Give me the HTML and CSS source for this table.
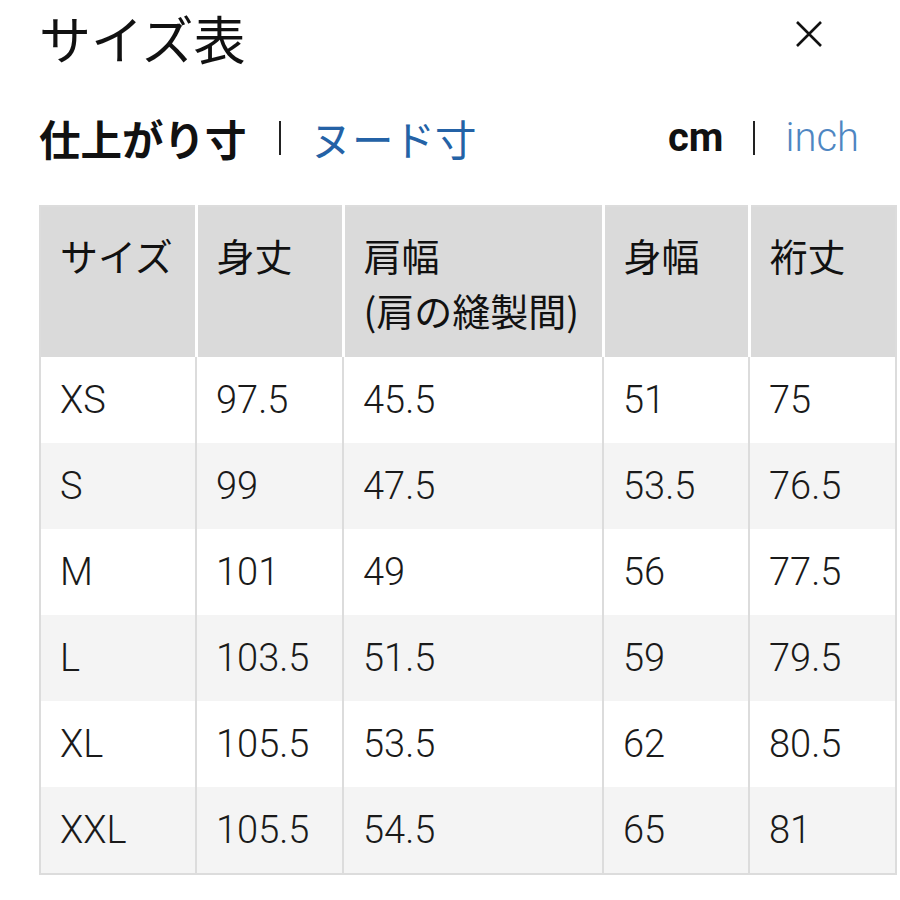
FILE: index.html
```html
<!DOCTYPE html>
<html lang="ja">
<head>
<meta charset="utf-8">
<link rel="stylesheet" href="styles.css">
</head>
<body>
<div class="page">
  <header class="title-row">
    <h1 class="title">サイズ表</h1>
    <button class="close" aria-label="閉じる">
      <svg width="28" height="28" viewBox="0 0 28 28"><path d="M2 2 L26 26 M26 2 L2 26" stroke="#111" stroke-width="2.6" fill="none"/></svg>
    </button>
  </header>
  <div class="tabs-row">
    <div class="tabs">
      <span class="tab active">仕上がり寸</span>
      <span class="sep"></span>
      <span class="tab link">ヌード寸</span>
    </div>
    <div class="units">
      <span class="unit active">cm</span>
      <span class="sep"></span>
      <span class="unit link">inch</span>
    </div>
  </div>
  <table class="size-table">
    <colgroup>
      <col class="c1"><col class="c2"><col class="c3"><col class="c4"><col class="c5">
    </colgroup>
    <thead>
      <tr><th>サイズ</th><th>身丈</th><th>肩幅<br>(肩の縫製間)</th><th>身幅</th><th>裄丈</th></tr>
    </thead>
    <tbody>
      <tr><td>XS</td><td>97.5</td><td>45.5</td><td>51</td><td>75</td></tr>
      <tr><td>S</td><td>99</td><td>47.5</td><td>53.5</td><td>76.5</td></tr>
      <tr><td>M</td><td>101</td><td>49</td><td>56</td><td>77.5</td></tr>
      <tr><td>L</td><td>103.5</td><td>51.5</td><td>59</td><td>79.5</td></tr>
      <tr><td>XL</td><td>105.5</td><td>53.5</td><td>62</td><td>80.5</td></tr>
      <tr><td>XXL</td><td>105.5</td><td>54.5</td><td>65</td><td>81</td></tr>
    </tbody>
  </table>
</div>
</body>
</html>
```
FILE: styles.css
```css
html, body {
  margin: 0;
  padding: 0;
  background: #fff;
}
body {
  font-family: "Noto Sans CJK JP", "Noto Sans", sans-serif;
  color: #111;
}
.page {
  padding: 0 5px 0 39px;
}
.title-row {
  display: flex;
  justify-content: space-between;
  align-items: flex-start;
  height: 78px;
}
.title {
  margin: 0;
  font-size: 52px;
  font-weight: 400;
  line-height: 1.45;
  padding-top: 0;
}
.close {
  background: none;
  border: 0;
  padding: 0;
  margin-right: 72px;
  margin-top: 20px;
  display: flex;
}
.tabs-row {
  display: flex;
  justify-content: space-between;
  align-items: center;
  height: 120px;
  padding-right: 36px;
}
.tabs, .units {
  display: flex;
  align-items: center;
}
.tab {
  font-size: 41.5px;
  line-height: 1.45;
}
.tab.active {
  font-weight: 700;
  color: #111;
}
.tab.link {
  color: #2462a6;
}
.sep {
  display: inline-block;
  width: 2px;
  height: 34px;
  background: #222;
}
.tabs .sep {
  margin: 0 30px 0 32px;
}
.units .sep {
  margin: 0 30px;
}
.unit {
  font-family: Roboto, "Liberation Sans", sans-serif;
  font-size: 40px;
  line-height: 1.2;
}
.unit.active {
  font-weight: 700;
}
.unit.link {
  font-weight: 300;
  color: #4f86c2;
}
.size-table {
  width: 856px;
  margin-top: 7px;
  border-collapse: collapse;
  table-layout: fixed;
  border: 2px solid #dcdcdc;
}
.c1 { width: 156px; }
.c2 { width: 147px; }
.c3 { width: 260px; }
.c4 { width: 146px; }
.c5 { width: 147px; }
.size-table th {
  background: #dadada;
  font-weight: 400;
  font-size: 38px;
  line-height: 55px;
  text-align: left;
  vertical-align: top;
  padding: 20px 16px 20px 19px;
  border-left: 3px solid #fff;
  height: 110px;
}
.size-table th:first-child {
  border-left: 0;
}
.size-table td {
  font-family: Roboto, "Liberation Sans", sans-serif;
  font-weight: 300;
  font-size: 38px;
  height: 86px;
  padding: 0 16px 0 19px;
  border-left: 2px solid #dcdcdc;
  vertical-align: middle;
  color: #1a1a1a;
}
.size-table tbody tr:nth-child(odd) td {
  background: #fff;
}
.size-table tbody tr:nth-child(even) td {
  background: #f4f4f4;
}
```
